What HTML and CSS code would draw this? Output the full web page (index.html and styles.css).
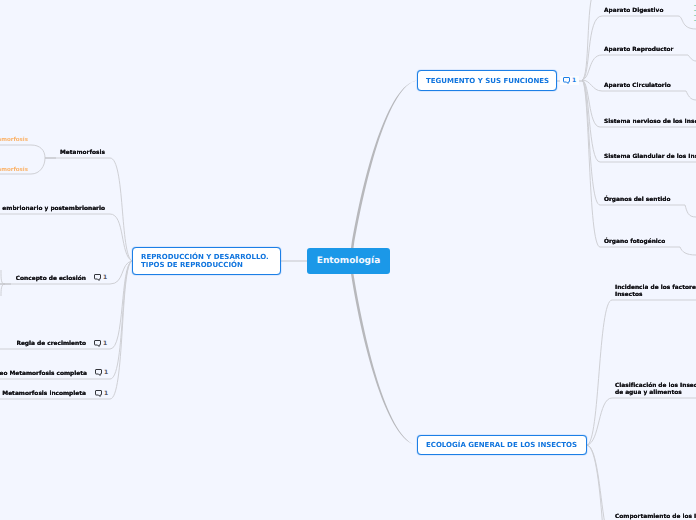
FILE: index.html
```html
<!DOCTYPE html>
<html lang="es">
<head>
<meta charset="utf-8">
<title>Entomología</title>
<link rel="stylesheet" href="styles.css">
</head>
<body>
<main class="map">
<svg class="links" width="696" height="520" viewBox="0 0 696 520" fill="none">
  <path class="taper" d="M351 248C363 175 388 84 417 80.600C389 85 366 176 353.500 248Z"/>
  <path class="taper" d="M351 274C363 350 388 441 417 445.400C389 440 366 350 353.500 274Z"/>
  <path class="trunk" d="M281 261H307"/>
  <g class="branch">
    <path d="M132 261C120 255 125 158 110 158H45"/>
    <path d="M0 145H31C40 145 45 150 45 158C45 166 40 174 31 174H0"/>
    <path d="M132 261C120 255 125 214 110 214H0"/>
    <path d="M132 261C120 263 125 284 110 284H0"/>
    <path d="M1 270C1 280 1 284 5 284"/>
    <path d="M1 296C1 290 1 284 5 284"/>
    <path d="M132 261C120 265 125 349 110 349H0"/>
    <path d="M132 261C120 265 125 379 110 379H0"/>
    <path d="M132 261C120 265 125 399 110 399H0"/>

    <path d="M582 80C590 78 586 0 594 -8"/>
    <path d="M582 80C591 78 586 16 602 16H678C684 16 680 29 696 29"/>
    <path d="M582 80C591 78 588 55 602 55H688C690 57 692 61 696 61"/>
    <path d="M582 80C591 80 592 91 602 91H686C688 95 690 100 696 100"/>
    <path d="M582 80C590 82 588 127 600 127H696"/>
    <path d="M582 80C590 82 588 162 600 162H696"/>
    <path d="M582 80C590 84 588 205 600 205H685C687 212 688 217 696 217"/>
    <path d="M582 80C590 84 588 247 600 247H680C682 252 686 255 696 255"/>

    <path d="M587 445C600 443 598 300 612 300H696"/>
    <path d="M587 445C600 443 598 398 612 398H696"/>
    <path d="M587 445C598 447 600 500 606 530"/>
    <path d="M587 445C596 447 600 490 603 530"/>
  </g>
  <path class="stub" d="M45 158H56M0 284H11M557 81H561M577 81H583"/>
</svg>

<div class="root">Entomología</div>
<div class="topic t-repro">REPRODUCCIÓN Y DESARROLLO.<br>TIPOS DE REPRODUCCIÓN</div>
<div class="topic t-teg">TEGUMENTO Y SUS FUNCIONES</div>
<div class="topic t-eco">ECOLOGÍA GENERAL DE LOS INSECTOS</div>

<div class="note note-blue n-teg"><svg class="bubble" viewBox="0 0 7 7"><path d="M1 .5h5a.5.500 0 0 1 .5.500v3.500a.5.500 0 0 1-.5.500H5v1.500L3.500 5H1a.5.500 0 0 1-.5-.500V1A.5.500 0 0 1 1 .5z"/></svg><span>1</span></div>

<div class="label l-meta">Metamorfosis</div>
<div class="label l-emb">embrionario y postembrionario</div>
<div class="label l-ecl">Concepto de eclosión</div>
<div class="label l-reg">Regla de crecimiento</div>
<div class="label l-com">eo Metamorfosis completa</div>
<div class="label l-inc">Metamorfosis incompleta</div>
<div class="orange o-1">Metamorfosis</div>
<div class="orange o-2">Metamorfosis</div>

<div class="note n-ecl"><svg class="bubble" viewBox="0 0 7 7"><path d="M1 .5h5a.5.500 0 0 1 .5.500v3.500a.5.500 0 0 1-.5.500H5v1.500L3.500 5H1a.5.500 0 0 1-.5-.500V1A.5.500 0 0 1 1 .5z"/></svg><span>1</span></div>
<div class="note n-reg"><svg class="bubble" viewBox="0 0 7 7"><path d="M1 .5h5a.5.500 0 0 1 .5.500v3.500a.5.500 0 0 1-.5.500H5v1.500L3.500 5H1a.5.500 0 0 1-.5-.500V1A.5.500 0 0 1 1 .5z"/></svg><span>1</span></div>
<div class="note n-com"><svg class="bubble" viewBox="0 0 7 7"><path d="M1 .5h5a.5.500 0 0 1 .5.500v3.500a.5.500 0 0 1-.5.500H5v1.500L3.500 5H1a.5.500 0 0 1-.5-.500V1A.5.500 0 0 1 1 .5z"/></svg><span>1</span></div>
<div class="note n-inc"><svg class="bubble" viewBox="0 0 7 7"><path d="M1 .5h5a.5.500 0 0 1 .5.500v3.500a.5.500 0 0 1-.5.500H5v1.500L3.500 5H1a.5.500 0 0 1-.5-.500V1A.5.500 0 0 1 1 .5z"/></svg><span>1</span></div>

<div class="label r-dig">Aparato Digestivo</div>
<div class="label r-rep">Aparato Reproductor</div>
<div class="label r-cir">Aparato Circulatorio</div>
<div class="label r-ner">Sistema nervioso de los Insectos</div>
<div class="label r-gla">Sistema Glandular de los Insectos</div>
<div class="label r-sen">Órganos del sentido</div>
<div class="label r-fot">Órgano fotogénico</div>
<div class="label e-inc">Incidencia de los factores climáticos<br>Insectos</div>
<div class="label e-cla">Clasificación de los Insectos según<br>de agua y alimentos</div>
<div class="label e-cmp">Comportamiento de los Insectos</div>
<div class="green">-<br>-<br>-<br>-</div>
</main>
</body>
</html>
```

FILE: styles.css
```css
* { box-sizing: border-box; }
html, body { margin: 0; padding: 0; background: #f3f6ff; }
.map {
  position: relative;
  width: 696px;
  height: 520px;
  overflow: hidden;
  background: #f3f6ff;
  font-family: "DejaVu Sans", sans-serif;
  font-weight: 700;
  text-rendering: geometricPrecision;
}
.links { position: absolute; left: 0; top: 0; }
.taper { fill: #b7b8bc; }
.trunk { stroke: #c4c5ca; stroke-width: 1; }
.branch path { stroke: #cfd0d5; stroke-width: 1; }
.stub { stroke: #bfc0c5; stroke-width: 1; }

.root {
  position: absolute;
  left: 307px;
  top: 248px;
  width: 83px;
  height: 26px;
  display: flex;
  align-items: center;
  justify-content: center;
  background: #1b98e8;
  border-radius: 3px;
  color: #f4f8ff;
  font-size: 9px;
}
.topic {
  position: absolute;
  display: flex;
  align-items: center;
  background: #fff;
  border: 1px solid #1c7fe6;
  border-radius: 4px;
  box-shadow: 0 0 1px #1c7fe6;
  color: #0f74de;
  font-size: 7px;
  line-height: 8px;
  white-space: nowrap;
  transform: translateZ(0);
}
.t-repro { left: 132px; top: 247px; width: 149px; height: 28px; padding-left: 8px; }
.t-teg { left: 417px; top: 70px; width: 140px; height: 21px; padding-left: 8px; }
.t-eco { left: 417px; top: 435px; width: 170px; height: 20px; padding-left: 8px; }

.label {
  position: absolute;
  color: #15151a;
  font-size: 5.850px;
  line-height: 7px;
  white-space: nowrap;
  text-shadow: 0 0 .4px #15151a;
  transform: translateZ(0);
}
.l-meta { right: 591px; top: 150px; }
.l-emb { right: 591px; top: 206px; }
.l-ecl { right: 610px; top: 276px; }
.l-reg { right: 610px; top: 341px; }
.l-com { right: 609px; top: 371px; }
.l-inc { right: 610px; top: 391px; }
.r-dig { left: 604px; top: 8px; }
.r-rep { left: 604px; top: 47px; }
.r-cir { left: 604px; top: 83px; }
.r-ner { left: 604px; top: 119px; }
.r-gla { left: 604px; top: 154px; }
.r-sen { left: 604px; top: 197px; }
.r-fot { left: 604px; top: 239px; }
.e-inc { left: 615px; top: 285px; }
.e-cla { left: 615px; top: 383px; }
.e-cmp { left: 615px; top: 514px; }

.orange {
  position: absolute;
  right: 668px;
  color: #fbb268;
  font-size: 5.500px;
  font-weight: 700;
  line-height: 6px;
  white-space: nowrap;
  transform: translateZ(0);
}
.o-1 { top: 137px; }
.o-2 { top: 167px; }
.green {
  position: absolute;
  left: 694px;
  top: 4px;
  color: #57c08a;
  font-size: 5px;
  line-height: 5px;
}

.note {
  position: absolute;
  display: flex;
  align-items: center;
  gap: 2px;
  color: #55585f;
  font-size: 6px;
  line-height: 7px;
}
.bubble { width: 7px; height: 7px; fill: none; stroke: #33353b; stroke-width: 1; }
.note-blue { color: #1c7fe6; background: #fbfcff; padding: 1px 3px; }
.note-blue .bubble { stroke: #1c7fe6; }
.n-teg { left: 560px; top: 76px; }
.n-ecl { left: 94px; top: 274px; }
.n-reg { left: 94px; top: 340px; }
.n-com { left: 95px; top: 369px; }
.n-inc { left: 95px; top: 390px; }
```
